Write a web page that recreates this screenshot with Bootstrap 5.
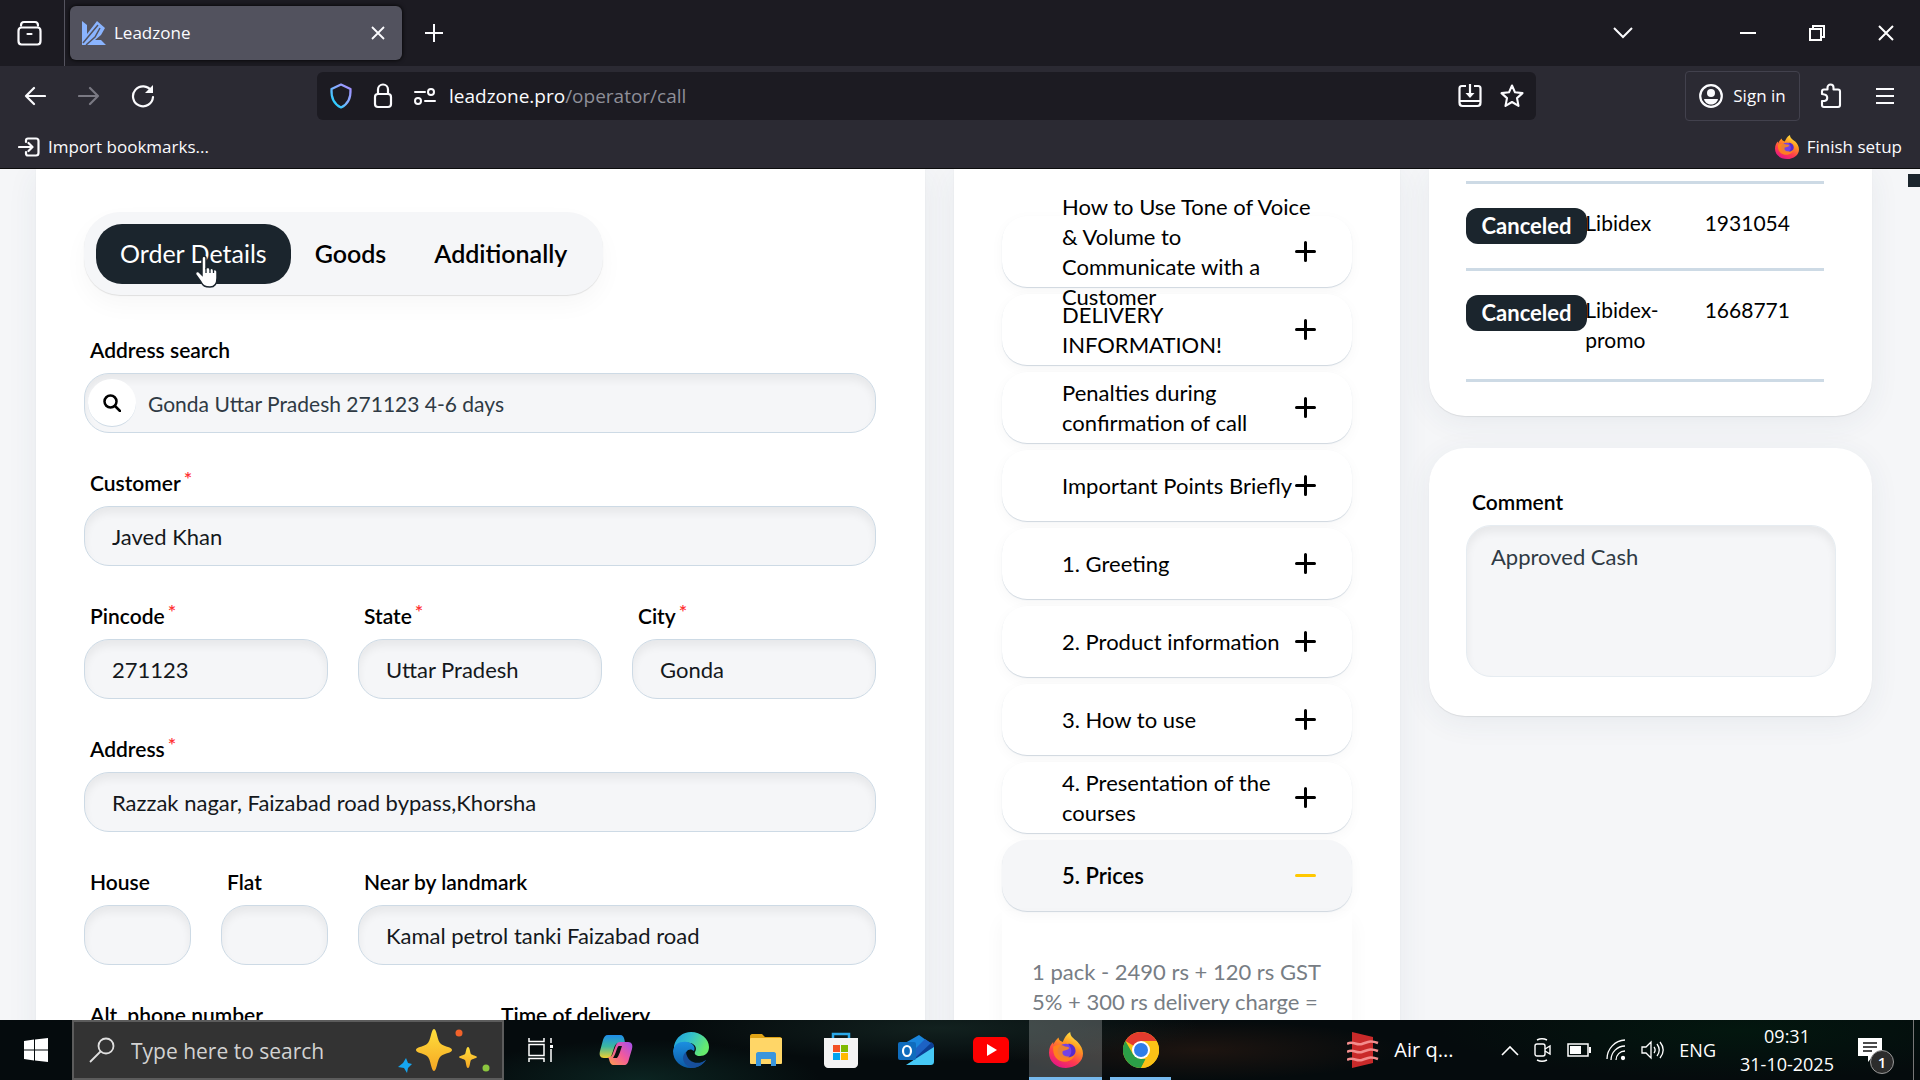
<!DOCTYPE html>
<html lang="en">
<head>
<meta charset="utf-8">
<meta name="viewport" content="width=device-width, initial-scale=1">
<title>Leadzone</title>
<link href="https://cdn.jsdelivr.net/npm/bootstrap@5.3.0/dist/css/bootstrap.min.css" rel="stylesheet">
<style>
  :root { --ink:#1b252d; --soft:#f5f6f8; --line:#cddae5; --ui:"Open Sans","Noto Sans",sans-serif; }
  body { font-family:Lato,"Open Sans",sans-serif; font-size:22px; line-height:30px; color:#000; background:var(--soft); font-variant-ligatures:none; }
  svg { display:block; flex:none; }
  .chrome-ui { font-family:var(--ui); font-size:17px; line-height:24px; color:#fbfbfe; background:#2b2a33; border-bottom:1px solid #0c0c0d; }
  .chrome-ui .btn, .taskbar .btn { color:inherit; padding:0; border:0; border-radius:4px; font-size:inherit; line-height:inherit; display:flex; align-items:center; justify-content:center; }
  .tabstrip { background:#1c1b22; height:66px; }
  .tabstrip .view-btn { width:65px; border-right:1px solid #55545f; padding-right:4px; }
  .page-tab { width:332px; height:54px; margin:6px 0 6px 5px; padding:0 14px 0 12px; background:#52525e; border-radius:6px; box-shadow:0 0 4px #000; }
  .wide-btn { width:69px; }
  .list-gap { width:23px; }
  .navrow { height:60px; }
  .nav-btn { width:54px; height:48px; }
  .url-box { height:48px; background:#1c1b22; border-radius:6px; padding:0 12px; margin-left:147px; margin-right:149px; gap:18px; }
  .url-text { font-size:19px; color:#8f8f98; text-decoration:none; margin-left:-6px; }
  .url-text b { font-weight:400; color:#fbfbfe; }
  .chrome-ui .sign-in { width:115px; height:50px; border:1px solid #42414d; gap:10px; }
  .bookrow { height:42px; padding:0 18px; }

  .page-body { min-height:0; padding:0 48px 0 36px; position:relative; }
  .cols { display:grid; grid-template-columns:889fr 446fr 443fr; column-gap:29px; }
  .panel { background:#fff; box-shadow:0 6px 30px rgba(40,70,100,.07), 0 1px 1px rgba(0,0,0,.08); }
  .panel-form { padding:43px 49px 0 48px; }
  .panel-script { padding:47px 48px 0; min-height:900px; }
  .panel-orders { border-radius:0 0 36px 36px; padding:12px 48px 34px 37px; margin-bottom:32px; }
  .panel-comment { border-radius:36px; padding:39px 36px 39px 37px; }
  .switcher { display:inline-flex; background:var(--soft); border-radius:36px; padding:12px 12px 11px; margin-bottom:40px; box-shadow:0 10px 24px rgba(0,0,0,.035), 0 1px 1px rgba(0,0,0,.1); }
  .switcher .btn { height:60px; padding:0 24px; border:0; border-radius:26px; font-size:25px; font-weight:600; color:#000; position:relative; }
  .switcher .btn.active { background:var(--ink); color:#fff; font-weight:400; }
  .pointer { position:absolute; left:97px; top:31px; }
  .form-label { font-weight:600; margin:0 0 8px 6px; display:block; font-size:21px; }
  .form-label sup { color:#f33; font-size:20px; top:-5px; margin-left:3px; line-height:0; }
  .form-control, .form-control:focus { background:var(--soft); border:1px solid var(--line); border-radius:25px; box-shadow:inset 0 6px 8px rgba(0,0,0,.06); font-size:22px; line-height:30px; color:#14181c; }
  input.form-control { height:60px; padding:0 27px; }
  .fields { --bs-gutter-x:30px; }
  .fields > div { margin-bottom:35px; }
  .find-wrap { position:relative; }
  .find-wrap input.form-control { padding-left:63px; color:#2f3a44; font-size:21px; }
  .find-btn { position:absolute; left:4px; top:6px; width:48px; height:48px; border-radius:24px; background:#fff; border:0; border-bottom:1px solid var(--line); display:flex; align-items:center; justify-content:center; }
  .script-item { display:flex; align-items:center; justify-content:space-between; width:100%; height:71px; margin-bottom:7px; border:0; border-radius:25px; background:#fff; padding:0 36px 0 60px; text-align:left; box-shadow:0 4px 14px rgba(0,0,0,.035), 0 1px 1px #d5dde5; color:#000; }
  .script-item span { white-space:nowrap; width:230px; position:relative; z-index:1; }
  .script-item.opened { background:var(--soft); font-weight:600; margin-bottom:0; }
  .script-text { padding:46px 30px; color:#777d84; box-shadow:0 10px 20px rgba(0,0,0,.04); height:200px; white-space:nowrap; }
  .orders { width:100%; table-layout:fixed; border-top:3px solid var(--line); }
  .orders td { padding:24px 0; vertical-align:top; border-bottom:3px solid var(--line); font-size:21px; }
  .orders .badge { display:flex; align-items:center; justify-content:center; width:121px; height:36px; border-radius:12px; background:var(--ink); font-size:22px; line-height:30px; font-weight:700; padding:0; }
  textarea.form-control { height:152px; padding:16px 24px; resize:none; border-color:#e6ecf1; color:#2f3a44; }
  .scroll-mark { position:absolute; right:0; top:5px; width:12px; height:13px; background:var(--ink); }

  .taskbar { height:60px; font-family:var(--ui); font-size:18px; line-height:26px; color:#fff; background:radial-gradient(ellipse 180px 40px at 640px 60px,#0b2421,transparent), radial-gradient(ellipse 260px 34px at 940px 8px,#12211f,transparent), radial-gradient(ellipse 200px 30px at 1200px 30px,#1d1410,transparent), radial-gradient(ellipse 300px 50px at 1740px 10px,#03170f,transparent), #050b0d; }
  .taskbar .start-btn { width:72px; }
  .find-task { width:432px; background:#333; border:2px solid #5c5c5c; padding:0 12px 0 15px; gap:16px; }
  .find-task input { background:none; border:0; outline:0; color:#d2d2d2; font-size:21px; padding:2px 0 0; min-width:0; }
  .find-task input::placeholder { color:#d2d2d2; opacity:1; }
  .taskbar .app-btn { width:73px; margin-right:2px; border-radius:0; border-bottom:3px solid transparent; border-top:3px solid transparent; }
  .taskbar .app-btn.current { background:rgba(255,255,255,.22); border-bottom-color:#76b9ed; }
  .app-btn.running { position:relative; }
  .app-btn.running::after { content:""; position:absolute; left:6px; right:6px; bottom:-3px; height:3px; background:#76b9ed; }
  .tray { gap:15px; margin-left:auto; padding-right:6px; }
  .air-text { font-size:20px; width:76px; margin-right:16px; }
  .clock-box { width:112px; text-align:center; font-size:18px; line-height:28px; }
  .notice { position:relative; width:36px; height:60px; margin-right:4px; }
  .notice-count { position:absolute; right:0; bottom:6px; width:24px; height:24px; border-radius:12px; background:#2c2c2c; border:1px solid #999; font-size:15px; line-height:22px; text-align:center; font-weight:600; }
  .desk-edge { width:1px; background:#777; height:60px; }
</style>
<script src="https://cdn.jsdelivr.net/npm/bootstrap@5.3.0/dist/js/bootstrap.bundle.min.js"></script>
</head>
<body>
<svg width="0" height="0" class="position-absolute" aria-hidden="true">
  <defs>
    <linearGradient id="shieldG" x1="0" y1="1" x2="1" y2="0"><stop offset="0" stop-color="#00ddff"/><stop offset=".5" stop-color="#80b0ff"/><stop offset="1" stop-color="#a88cff"/></linearGradient>
    <linearGradient id="foxG" x1=".8" y1="0" x2=".3" y2="1"><stop offset="0" stop-color="#fff44f"/><stop offset=".35" stop-color="#ff9a1f"/><stop offset=".7" stop-color="#ff3b4e"/><stop offset="1" stop-color="#e31587"/></linearGradient>
    <linearGradient id="edgeG" x1="0" y1="0" x2="1" y2=".4"><stop offset="0" stop-color="#1b9de2"/><stop offset=".5" stop-color="#35c1c9"/><stop offset="1" stop-color="#66eb6e"/></linearGradient>
    <linearGradient id="edgeB" x1="0" y1="0" x2="0" y2="1"><stop offset="0" stop-color="#1b8fe0"/><stop offset="1" stop-color="#0c59a4"/></linearGradient>
    <linearGradient id="copA" x1="0" y1="0" x2="0" y2="1"><stop offset="0" stop-color="#1f8dea"/><stop offset=".5" stop-color="#3cb8a0"/><stop offset="1" stop-color="#f0d030"/></linearGradient>
    <linearGradient id="copB" x1="1" y1="0" x2="0" y2="1"><stop offset="0" stop-color="#a34ff0"/><stop offset=".5" stop-color="#f25a9b"/><stop offset="1" stop-color="#ffa04a"/></linearGradient>
    <linearGradient id="starG" x1="0" y1="0" x2="0" y2="1"><stop offset="0" stop-color="#ffdf3c"/><stop offset="1" stop-color="#f5a623"/></linearGradient>
    <symbol id="fox" viewBox="0 0 32 40" preserveAspectRatio="none">
      <path d="M20 0c0 5 3 7 7 11 3 4 5 8 5 13 0 9-7 16-16 16S0 33 0 23C0 17 2 13 4 11v3c1-3 3-6 5-8 0 3 2 4 4 5 2-5 3-8 7-11z" fill="url(#foxG)"/>
      <circle cx="16" cy="21" r="8" fill="#7542e5"/>
      <path d="M4 16c4-2 8-2 11 0 3 0 4 1 4 2-1 2-4 2-6 3-1 3 0 5 3 6 4 1 7-1 8-5 1 6-3 11-9 11-7 0-12-6-11-17z" fill="#ff8a16" opacity=".85"/>
      <path d="M18 13c4 0 7 3 7 8 0 4-3 7-7 7 3-2 5-8 0-15z" fill="#592acb"/>
    </symbol>
    <symbol id="plus" viewBox="0 0 21 21"><path d="M10.500 1.500v18M1.500 10.500h18" stroke="#000" stroke-width="3" stroke-linecap="round"/></symbol>
  </defs>
</svg>

<div class="d-flex flex-column vh-100 overflow-hidden">
  <header class="chrome-ui">
    <div class="tabstrip d-flex">
      <button class="btn view-btn rounded-0" aria-label="View"><svg width="26" height="26" viewBox="0 0 26 26" fill="none" stroke="#fbfbfe" stroke-width="2.200" stroke-linecap="round"><path d="M4 5.500C4 3 5 2 7 2h11c2 0 3 1 3 3.500M1.500 11c0-2 1-3.500 3-3.500h16c2 0 3 1.500 3 3.500v10c0 2-1 3.500-3 3.500h-16c-2 0-3-1.500-3-3.500zM10.500 14h4"/></svg></button>
      <div class="page-tab d-flex align-items-center">
        <svg width="24" height="24" viewBox="0 0 24 24" fill="#8ab4ff"><path d="M0 0l5 4v9L15 0l8 7-4 7-6 5h6l5 5H0z"/><path d="M1 22L16 4M4 24l9-8 5-9" fill="none" stroke="#52525e" stroke-width="1.500"/></svg>
        <span class="ms-2 flex-grow-1">Leadzone</span>
        <button class="btn" aria-label="Close tab"><svg width="20" height="20" viewBox="0 0 20 20" stroke="#fbfbfe" stroke-width="1.800"><path d="M4 4l12 12M16 4L4 16"/></svg></button>
      </div>
      <button class="btn ms-3" aria-label="New tab"><svg width="32" height="32" viewBox="0 0 32 32" stroke="#fbfbfe" stroke-width="2"><path d="M16 7v18M7 16h18"/></svg></button>
      <div class="d-flex ms-auto">
        <button class="btn me-5" aria-label="List tabs"><svg width="38" height="20" viewBox="0 0 38 20" fill="none" stroke="#fbfbfe" stroke-width="2"><path d="M10 5l9 9 9-9"/></svg></button>
        <span class="list-gap"></span>
        <button class="btn wide-btn" aria-label="Minimize"><svg width="16" height="16" viewBox="0 0 16 16"><path d="M0 8h16" stroke="#fff" stroke-width="2"/></svg></button>
        <button class="btn wide-btn" aria-label="Restore"><svg width="16" height="16" viewBox="0 0 16 16" fill="none" stroke="#fff" stroke-width="2"><path d="M1 4h11v11H1zM4 4V1h11v11h-3"/></svg></button>
        <button class="btn wide-btn" aria-label="Close"><svg width="16" height="16" viewBox="0 0 16 16" stroke="#fff" stroke-width="2"><path d="M1 1l14 14M15 1L1 15"/></svg></button>
      </div>
    </div>
    <div class="navrow d-flex align-items-center px-2">
      <button class="btn nav-btn" aria-label="Back"><svg width="22" height="20" viewBox="0 0 22 20" fill="none" stroke="#fbfbfe" stroke-width="2.200" stroke-linecap="round" stroke-linejoin="round"><path d="M10 2l-8 8 8 8M2 10h19"/></svg></button>
      <button class="btn nav-btn" aria-label="Forward"><svg width="22" height="20" viewBox="0 0 22 20" fill="none" stroke="#7a7983" stroke-width="2.200" stroke-linecap="round" stroke-linejoin="round"><path d="M12 2l8 8-8 8M20 10H1"/></svg></button>
      <button class="btn nav-btn" aria-label="Reload"><svg width="24" height="24" viewBox="0 0 24 24" fill="none" stroke="#fbfbfe" stroke-width="2.200" stroke-linecap="round"><path d="M20.500 7A10 10 0 1 0 22 13"/><path d="M22 1v8h-8z" fill="#fbfbfe" stroke="none"/></svg></button>
      <div class="url-box d-flex align-items-center flex-grow-1">
        <svg width="24" height="26" viewBox="0 0 24 26" fill="none" stroke="url(#shieldG)" stroke-width="2.200" stroke-linejoin="round"><path d="M12 1.500L21.500 6c.5 9-2 15-9.500 18.500C4.500 21 2 15 2.500 6z"/></svg>
        <svg width="24" height="26" viewBox="0 0 24 26" fill="none" stroke="#fbfbfe" stroke-width="2.200"><rect x="4" y="11" width="16" height="13" rx="3"/><path d="M7 11V6.500a5 5 0 0 1 10 0V11"/></svg>
        <svg width="24" height="18" viewBox="0 0 24 18" fill="none" stroke="#fbfbfe" stroke-width="2" stroke-linecap="round"><path d="M2 5h10M12 14h10"/><circle cx="18" cy="5" r="3"/><circle cx="5" cy="14" r="3"/></svg>
        <a class="url-text flex-grow-1" href="#"><b>leadzone.pro</b>/operator/call</a>
        <svg width="24" height="24" viewBox="0 0 24 24" fill="none" stroke="#fbfbfe" stroke-width="2.200"><path d="M8 2H4C2 2 1.500 3 1.500 4.500v14c0 2 1 3.500 3 3.500h15c2 0 3-1.500 3-3.500v-14C22.500 3 22 2 20 2h-4M2 17h20"/><path d="M12 0v11"/><path d="M7.500 9h9L12 14z" fill="#fbfbfe" stroke="none"/></svg>
        <svg width="24" height="24" viewBox="0 0 24 24" fill="none" stroke="#fbfbfe" stroke-width="2.100" stroke-linejoin="round"><path d="M12 1.500l3 6.800 7.500.8-5.500 5 1.500 7.800L12 18l-6.500 3.900L7 14.100l-5.500-5L9 8.300z"/></svg>
      </div>
      <button class="btn sign-in"><svg width="24" height="24" viewBox="0 0 24 24"><circle cx="12" cy="12" r="10.800" fill="none" stroke="#fbfbfe" stroke-width="2.200"/><circle cx="12" cy="9" r="4" fill="#fbfbfe"/><path d="M5 15h14c-1 4-4 5.500-7 5.500S6 19 5 15z" fill="#fbfbfe"/></svg>Sign in</button>
      <button class="btn nav-btn ms-1" aria-label="Extensions"><svg width="24" height="26" viewBox="0 0 24 26" fill="none" stroke="#fbfbfe" stroke-width="2.100" stroke-linejoin="round"><path d="M3 11V8.500C3 7 4 6.500 5 6.500h3.500V4.500a3 3 0 0 1 6 0v2H19c1.500 0 2 1 2 2V22c0 1.500-.5 2-2 2H5c-1.500 0-2-.5-2-2v-4h2.500a3.300 3.300 0 0 0 0-6.500z"/></svg></button>
      <button class="btn nav-btn" aria-label="Menu"><svg width="20" height="18" viewBox="0 0 20 18" stroke="#fbfbfe" stroke-width="1.800"><path d="M1 2h18M1 9h18M1 16h18"/></svg></button>
    </div>
    <div class="bookrow d-flex align-items-center justify-content-between">
      <button class="btn gap-2"><svg width="22" height="20" viewBox="0 0 22 20" fill="none" stroke="#fbfbfe" stroke-width="2.200" stroke-linecap="round" stroke-linejoin="round"><path d="M8 5V3.500C8 2 9 1.500 10 1.500h8c1.500 0 2.500 1 2.500 2.500v12c0 1.500-1 2.500-2.500 2.500h-8c-1 0-2-.5-2-2V15M1 10h13M10.500 6l4 4-4 4"/></svg>Import bookmarks...</button>
      <button class="btn gap-2"><svg width="24" height="24"><use href="#fox"/></svg>Finish setup</button>
    </div>
  </header>

  <main class="page-body flex-grow-1 overflow-hidden">
    <div class="cols">
      <section class="panel panel-form">
        <div class="switcher" role="tablist">
          <button class="btn active" role="tab">Order Details
            <svg class="pointer" width="28" height="34" viewBox="0 0 28 34"><path d="M9 3c0-2.500 4-2.500 4 0v10c1-1 3.500-.8 4 .8 1-.8 3.200-.5 3.500 1 1.200-.6 3.500 0 3.500 2V23c0 6-2 9-7 9-5 0-7-1-9-5l-5-7c-1.500-2.500 1-4.500 3-3l3 3z" fill="#fff" stroke="#1b252d" stroke-width="1.500"/><path d="M13 13v5M17 14v4M20.500 15v3" stroke="#1b252d" stroke-width="1.300"/></svg>
          </button>
          <button class="btn" role="tab">Goods</button>
          <button class="btn" role="tab">Additionally</button>
        </div>
        <form class="row fields">
          <div class="col-12">
            <label class="form-label" for="find">Address search</label>
            <div class="find-wrap">
              <input class="form-control" id="find" value="Gonda Uttar Pradesh 271123 4-6 days">
              <button type="button" class="find-btn" aria-label="Search"><svg width="18" height="18" viewBox="0 0 18 18" fill="none" stroke="#000" stroke-width="2.500" stroke-linecap="round"><circle cx="7.500" cy="7.500" r="6"/><path d="M12 12l5 5"/></svg></button>
            </div>
          </div>
          <div class="col-12"><label class="form-label" for="cust">Customer<sup>*</sup></label><input class="form-control" id="cust" value="Javed Khan"></div>
          <div class="col-4"><label class="form-label" for="pin">Pincode<sup>*</sup></label><input class="form-control" id="pin" value="271123"></div>
          <div class="col-4"><label class="form-label" for="state">State<sup>*</sup></label><input class="form-control" id="state" value="Uttar Pradesh"></div>
          <div class="col-4"><label class="form-label" for="city">City<sup>*</sup></label><input class="form-control" id="city" value="Gonda"></div>
          <div class="col-12"><label class="form-label" for="addr">Address<sup>*</sup></label><input class="form-control" id="addr" value="Razzak nagar, Faizabad road bypass,Khorsha"></div>
          <div class="col-2"><label class="form-label" for="house">House</label><input class="form-control" id="house"></div>
          <div class="col-2"><label class="form-label" for="flat">Flat</label><input class="form-control" id="flat"></div>
          <div class="col-8"><label class="form-label" for="near">Near by landmark</label><input class="form-control" id="near" value="Kamal petrol tanki Faizabad road"></div>
          <div class="col-6"><label class="form-label" for="alt">Alt. phone number</label><input class="form-control" id="alt"></div>
          <div class="col-6"><label class="form-label" for="time">Time of delivery</label><input class="form-control" id="time"></div>
        </form>
      </section>

      <section class="panel panel-script">
        <button class="script-item"><span>How to Use Tone of Voice<br>&amp; Volume to<br>Communicate with a<br>Customer</span><svg width="21" height="21"><use href="#plus"/></svg></button>
        <button class="script-item"><span>DELIVERY<br>INFORMATION!</span><svg width="21" height="21"><use href="#plus"/></svg></button>
        <button class="script-item"><span>Penalties during<br>confirmation of call</span><svg width="21" height="21"><use href="#plus"/></svg></button>
        <button class="script-item"><span>Important Points Briefly</span><svg width="21" height="21"><use href="#plus"/></svg></button>
        <button class="script-item"><span>1. Greeting</span><svg width="21" height="21"><use href="#plus"/></svg></button>
        <button class="script-item"><span>2. Product information</span><svg width="21" height="21"><use href="#plus"/></svg></button>
        <button class="script-item"><span>3. How to use</span><svg width="21" height="21"><use href="#plus"/></svg></button>
        <button class="script-item"><span>4. Presentation of the<br>courses</span><svg width="21" height="21"><use href="#plus"/></svg></button>
        <button class="script-item opened" aria-expanded="true"><span>5. Prices</span><svg width="21" height="21" viewBox="0 0 21 21"><path d="M1.500 10.500h18" stroke="#ffc800" stroke-width="3" stroke-linecap="round"/></svg></button>
        <div class="script-text">1 pack - 2490 rs + 120 rs GST<br>5% + 300 rs delivery charge =</div>
      </section>

      <div>
        <section class="panel panel-orders">
          <table class="orders">
            <tr><td><span class="badge">Canceled</span></td><td>Libidex</td><td>1931054</td></tr>
            <tr><td><span class="badge">Canceled</span></td><td>Libidex-<br>promo</td><td>1668771</td></tr>
          </table>
        </section>
        <section class="panel panel-comment">
          <label class="form-label" for="note">Comment</label>
          <textarea class="form-control" id="note">Approved Cash</textarea>
        </section>
      </div>
    </div>
    <div class="scroll-mark"></div>
  </main>

  <footer class="taskbar d-flex">
    <button class="btn start-btn" aria-label="Start"><svg width="24" height="24" viewBox="0 0 24 24" fill="#fff"><path d="M0 3l10-1.400V11.500H0zM11 1.400L24 0v11.500H11zM0 12.500h10v9.900L0 21zM11 12.500h13V24l-13-1.500z"/></svg></button>
    <label class="find-task d-flex align-items-center">
      <svg width="26" height="26" viewBox="0 0 26 26" fill="none" stroke="#e0e0e0" stroke-width="1.800"><circle cx="17" cy="9" r="7.500"/><path d="M11.500 14.500L1 25"/></svg>
      <input class="flex-grow-1" placeholder="Type here to search" aria-label="Search">
      <svg width="92" height="46" viewBox="0 0 92 46"><path d="M36 2c3 0 3 12 7 15s11 3 11 6-7 3-11 6-4 15-7 15-3-12-7-15-11-3-11-6 7-3 11-6 4-15 7-15z" fill="url(#starG)"/><path d="M70 20c2 0 2 6 3 7s6 2 6 3-5 2-6 3-1 8-3 8-2-7-3-8-6-2-6-3 5-2 6-3 1-7 3-7z" fill="url(#starG)"/><path d="M8 31l2 5 4 1-4 4-1 5-3-5-6-1 5-4z" fill="#16a6f0"/><circle cx="61" cy="6" r="3.500" fill="#f2622a"/><circle cx="88" cy="41" r="3.500" fill="#8cc63f"/></svg>
    </label>
    <button class="btn app-btn" aria-label="Task view"><svg width="26" height="24" viewBox="0 0 26 24" fill="none" stroke="#fff" stroke-width="1.500"><path d="M1 6.500h15v11H1zM1 0v3.500h15V0M1 24v-3.500h15V24M23 0v5M23 11v13"/><path d="M22 7h3v3h-3z" fill="#fff" stroke="none"/></svg></button>
    <button class="btn app-btn" aria-label="Copilot"><svg width="34" height="32" viewBox="0 0 34 32"><path d="M9 1h12c3 0 4 2 4.500 5l.5 3h-6c-3 0-4 2-5 5l-2 6c-1 3-2 4-5 4H5c-4 0-5-3-4-7L4 6c1-3 2-5 5-5z" fill="url(#copA)"/><path d="M25 31H15c-3 0-4-2-5-6l-1-2c3 0 4-1 5-4l3-8c1-2 2-3 4-3h8c4 0 5 3 4 7l-3 10c-1 4-2 6-5 6z" fill="url(#copB)"/><path d="M20 12c-2 0-3 8-6 12h4c2-2 4-9 5-12z" fill="#0a0f10"/></svg></button>
    <button class="btn app-btn" aria-label="Edge"><svg width="36" height="36" viewBox="0 0 36 36"><path d="M1 14C3 5 10 0 18 0c10 0 18 7 18 15 0 6-4 9-9 9-4 0-6-2-5-4 2-3 1-8-5-9-7-1-13 2-16 8z" fill="url(#edgeG)"/><path d="M0 19C1 12 7 9 14 10c6 1 9 5 7 9-4-4-10 0-8 6 2 7 11 10 20 3-3 5-9 8-15 8C8 36 0 29 0 19z" fill="url(#edgeB)"/><path d="M13 20c-6 5-2 14 6 16 6 0 11-4 14-8-9 6-19 2-20-8z" fill="#174f9b"/></svg></button>
    <button class="btn app-btn" aria-label="Files"><svg width="32" height="32" viewBox="0 0 32 32"><path d="M0 2c0-1 1-2 2-2h10l3 3h15c1 0 2 1 2 2v5H0z" fill="#e0a315"/><rect y="4" width="32" height="26" rx="1" fill="#ffd667"/><path d="M6 32V20c0-1 1-2 2-2h16c1 0 2 1 2 2v12h-5v-7H11v7z" fill="#3a96dd"/></svg></button>
    <button class="btn app-btn" aria-label="Store"><svg width="34" height="36" viewBox="0 0 34 36"><path d="M9 8V2h16v6" fill="none" stroke="#2aa8e8" stroke-width="2.500"/><path d="M0 6h34v26c0 2-2 4-4 4H4c-2 0-4-2-4-4z" fill="#f3f3f3"/><path d="M9 13h7v7H9z" fill="#f25022"/><path d="M17 13h7v7h-7z" fill="#7fba00"/><path d="M9 21h7v7H9z" fill="#00a4ef"/><path d="M17 21h7v7h-7z" fill="#ffb900"/></svg></button>
    <button class="btn app-btn" aria-label="Outlook"><svg width="36" height="32" viewBox="0 0 36 32"><path d="M7 9L21 1l14 10v6H7z" fill="#1a86dc"/><path d="M15 22L33 8c2 1 3 2 3 4v16H15z" fill="#0c3f94"/><path d="M15 17L27 5l6 4-16 15z" fill="#1d62c4"/><path d="M8 31l28-18v14c0 3-1 4-4 4z" fill="#46c8f5"/><rect y="8" width="18" height="18" rx="2" fill="#0f6cbd"/><ellipse cx="9" cy="17" rx="4" ry="5" fill="none" stroke="#fff" stroke-width="2.200"/></svg></button>
    <button class="btn app-btn" aria-label="YouTube"><svg width="36" height="26" viewBox="0 0 36 26"><rect width="36" height="26" rx="5" fill="#f00"/><path d="M14 7l10 6-10 6z" fill="#fff"/></svg></button>
    <button class="btn app-btn current" aria-label="Firefox"><svg width="34" height="36"><use href="#fox"/></svg></button>
    <button class="btn app-btn running" aria-label="Chrome"><svg width="36" height="36" viewBox="0 0 36 36"><circle cx="18" cy="18" r="18" fill="#fbc116"/><path d="M18 18L2.400 9A18 18 0 0 1 33.600 9H18z" fill="#e33b2e"/><path d="M18 36A18 18 0 0 1 2.400 9l7.800 13.500L18 27h4.500z" fill="#2b9f47"/><path d="M18 9h15.600A18 18 0 0 1 18 36l7.800-13.500z" fill="#fbc116"/><circle cx="18" cy="18" r="9" fill="#fff"/><circle cx="18" cy="18" r="7" fill="#2f7de9"/></svg></button>
    <div class="tray d-flex align-items-center">
      <svg width="32" height="36" viewBox="0 0 32 36"><path d="M5 0l21 5v26L5 36z" fill="#c92a2a"/><path d="M0 12c6-4 9 2 15 0s8-4 16-1M0 20c6-4 9 2 15 0s8-4 16-1M0 28c6-4 9 2 15 0s8-4 16-1" fill="none" stroke="#f38d8d" stroke-width="2.500"/></svg>
      <span class="air-text">Air q...</span>
      <svg width="18" height="11" viewBox="0 0 18 11" fill="none" stroke="#fff" stroke-width="1.600"><path d="M1 10l8-8 8 8"/></svg>
      <svg width="18" height="24" viewBox="0 0 18 24" fill="none" stroke="#fff" stroke-width="1.400"><rect x="1" y="6" width="10" height="12" rx="2"/><path d="M11 11l5-3v8l-5-3M3 2c3-1.500 7-1.500 10 0M3 22c3 1.500 7 1.500 10 0"/></svg>
      <svg width="24" height="14" viewBox="0 0 24 14"><path d="M1 1h20v12H1z" fill="none" stroke="#fff" stroke-width="1.500"/><path d="M3 3h11v8H3zM22 4h2v6h-2z" fill="#fff"/></svg>
      <svg width="20" height="22" viewBox="0 0 20 22" fill="none" stroke="#fff" stroke-width="1.300"><path d="M1 20A19 19 0 0 1 19 1M5 21A14 14 0 0 1 19 7M10 21A9 9 0 0 1 19 12"/><circle cx="17" cy="19" r="1.500" fill="#fff"/></svg>
      <svg width="23" height="20" viewBox="0 0 23 20" fill="none" stroke="#fff" stroke-width="1.300"><path d="M1 7h4l5-5v16l-5-5H1zM13 7c1.500 2 1.500 4 0 6M16 4c3 4 3 8 0 12M19 2c4 5 4 11 0 16"/></svg>
      <span>ENG</span>
      <div class="clock-box">09:31<br>31-10-2025</div>
      <div class="notice"><svg class="mt-3" width="24" height="28" viewBox="0 0 24 28"><path d="M0 2h24v18h-9l-5 6v-6H0z" fill="#fff"/><path d="M5 7h14M5 11h14M5 15h9" stroke="#111" stroke-width="1.300"/></svg><span class="notice-count">1</span></div>
      <div class="desk-edge"></div>
    </div>
  </footer>
</div>
</body>
</html>
